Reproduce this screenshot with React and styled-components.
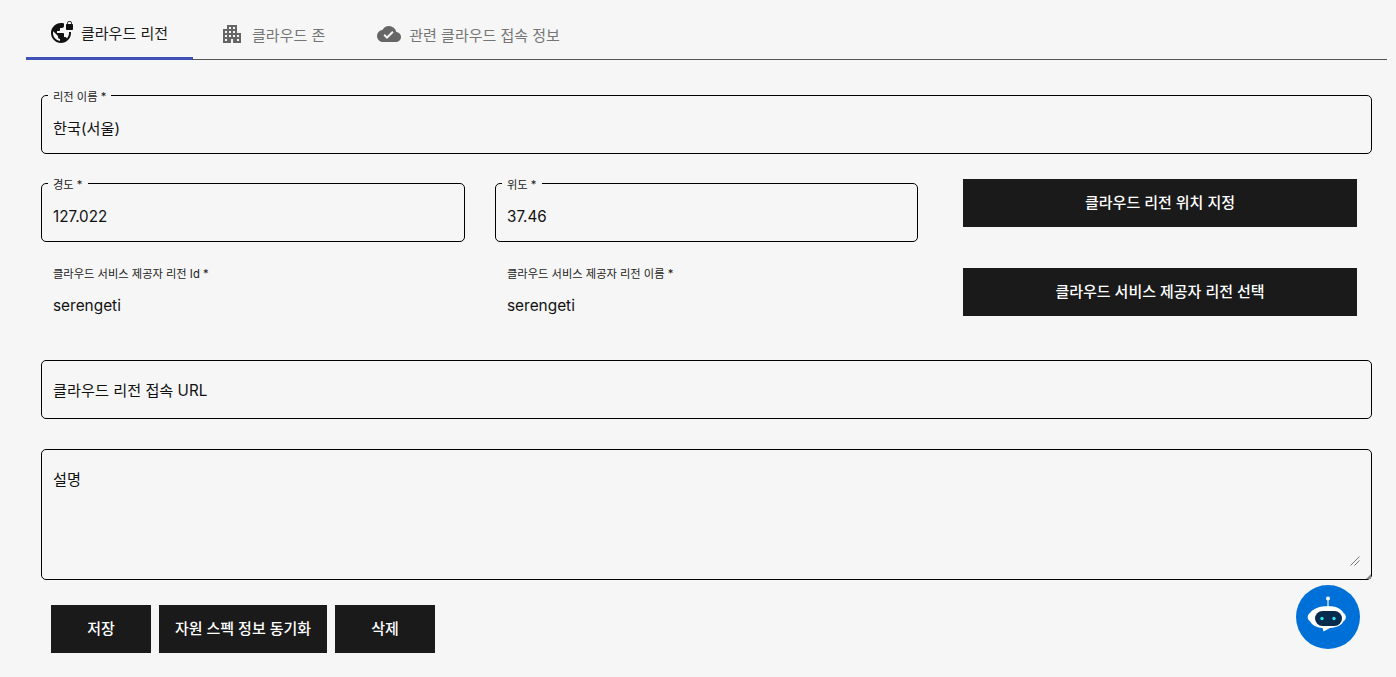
import React from "react";
import styled, { createGlobalStyle } from "styled-components";
import { MdVpnLock, MdApartment, MdCloudDone } from "react-icons/md";

const Global = createGlobalStyle`
  html, body { margin: 0; padding: 0; background: #f6f6f6; }
  body { font-family: Inter, "Noto Sans CJK KR", sans-serif; color: #111; }
  * { box-sizing: border-box; }
`;
const Page = styled.div`
  width: 1396px; height: 677px; overflow: hidden; padding: 0 9px 0 26px; position: relative;
`;
const Tabs = styled.div`
  display: flex; height: 60px; border-bottom: 1px solid #555;
`;
const Tab = styled.div`
  display: flex; align-items: center; gap: ${p => p.$gap}px; height: ${p => (p.$active ? 60 : 59)}px;
  padding: ${p => (p.$active ? "7px" : "9px")} ${p => p.$pr || 24}px 0 ${p => p.$pl}px;
  font-size: 15px; font-weight: 400;
  color: ${p => (p.$active ? "#1a1a1a" : "#757575")};
  border-bottom: ${p => (p.$active ? "3px solid #3f51b5" : "none")};
  svg { flex: none; width: 24px; height: 24px; color: ${p => (p.$active ? "#111" : "#666")}; }
`;
const Form = styled.div`
  display: flex; flex-direction: column; padding: 35px 15px 0 15px;
`;
const Outlined = styled.div`
  position: relative; height: ${p => p.$h || 59}px;
  margin-top: ${p => p.$mt || 0}px;
  border: 1px solid #000; border-radius: 5px; padding: ${p => p.$pt || 0}px 11px ${p => p.$pb || 0}px;
  display: flex; align-items: ${p => (p.$top ? "flex-start" : "center")};
  font-size: 15.2px; color: #111;
`;
const Float = styled.span`
  position: absolute; left: 6px; top: -5px; padding: 0 5px; background: #f6f6f6;
  font-size: 11.25px; line-height: 13px; color: #222;
`;
const Row = styled.div`
  display: grid; grid-template-columns: 424px 423px 394px; column-gap: 30px;
  margin-top: ${p => p.$mt}px; align-items: start;
  & > :nth-child(3) { margin-left: 15px; }
`;
const Plain = styled.div`
  padding: 0 12px; display: flex; flex-direction: column;
`;
const PlainLabel = styled.div`
  font-size: 11.25px; line-height: 13px; color: #222; margin-top: 26px;
`;
const PlainValue = styled.div`
  font-size: 15.4px; line-height: 18px; color: #111; margin-top: 16px;
`;
const Dark = styled.button`
  appearance: none; border: 0; background: #1a1a1a; color: #fff; height: 48px;
  font-family: inherit; font-size: 15px; font-weight: 500; padding: 0 0 4px;
  width: ${p => p.$w}px; margin-top: ${p => p.$mt || 0}px;
`;
const Actions = styled.div`
  display: flex; gap: 8px; margin-top: 25px; padding-left: 10px;
`;
const Gap = styled.div`height: ${p => p.$h}px;`;
const Grip = styled.svg`
  position: absolute; right: 11px; bottom: 13px;
`;
const Corner = styled.svg`
  position: absolute; right: 0; bottom: 0;
`;
const Chat = styled.div`
  position: fixed; left: 1296px; top: 585px; width: 64px; height: 64px; border-radius: 50%;
  background: #0070d9; display: flex; align-items: center; justify-content: center;
`;

const BotIcon = () => (
  <svg width="64" height="64" viewBox="0 0 64 64">
    <circle cx="32" cy="13.500" r="2" fill="#fff" />
    <rect x="31.300" y="15" width="1.400" height="7" fill="#cfe3f7" />
    <path fill="#fff" d="M32 21c8 0 13.500 2.800 15.500 7 1.500 1 2.300 2.500 2.300 4.300 0 1.700-.8 3-2.300 4-2 4.200-6.500 6.200-13.500 6.700l-6.500 3.500-1-3.500c-7-.6-10.500-3-12.500-6.700-1.500-1-2.300-2.300-2.300-4 0-1.800.8-3.300 2.300-4.300C16.500 23.800 24 21 32 21Z" />
    <rect x="19" y="26" width="27" height="15" rx="7.500" fill="#082a4d" />
    <circle cx="26" cy="33.500" r="1.700" fill="#2ee6f2" />
    <circle cx="38" cy="33.500" r="1.700" fill="#2ee6f2" />
  </svg>
);

export default function App() {
  return (
    <Page>
      <Global />
      <Tabs>
        <Tab $active $pl={24} $pr={25} $gap={7}><MdVpnLock />클라우드 리전</Tab>
        <Tab $pl={27} $gap={8}><MdApartment />클라우드 존</Tab>
        <Tab $pl={28} $gap={8}><MdCloudDone />관련 클라우드 접속 정보</Tab>
      </Tabs>
      <Form>
        <Outlined $pt={5}>
          <Float>리전 이름 *</Float>
          한국(서울)
        </Outlined>
        <Row $mt={25}>
          <Outlined $mt={4} $pt={7}>
            <Float>경도 *</Float>
            127.022
          </Outlined>
          <Outlined $mt={4} $pt={7}>
            <Float>위도 *</Float>
            37.46
          </Outlined>
          <Dark $w={394}>클라우드 리전 위치 지정</Dark>
        </Row>
        <Row $mt={0}>
          <Plain>
            <PlainLabel>클라우드 서비스 제공자 리전 Id *</PlainLabel>
            <PlainValue>serengeti</PlainValue>
          </Plain>
          <Plain>
            <PlainLabel>클라우드 서비스 제공자 리전 이름 *</PlainLabel>
            <PlainValue>serengeti</PlainValue>
          </Plain>
          <Dark $w={394} $mt={26}>클라우드 서비스 제공자 리전 선택</Dark>
        </Row>
        <Gap $h={44} />
        <Outlined $pb={2}>클라우드 리전 접속 URL</Outlined>
        <Gap $h={30} />
        <Outlined $h={131} $top $pt={17}>
          설명
          <Grip width="10" height="10" viewBox="0 0 10 10">
            <path d="M0.500 9.500 9.500 0.500M4.500 9.500l5-5" stroke="#666" strokeWidth="0.9" fill="none" />
          </Grip>
          <Corner width="5" height="5" viewBox="0 0 5 5">
            <path d="M0 5 5 0v5Z" fill="#888" />
          </Corner>
        </Outlined>
        <Actions>
          <Dark $w={100}>저장</Dark>
          <Dark $w={168}>자원 스펙 정보 동기화</Dark>
          <Dark $w={100}>삭제</Dark>
        </Actions>
      </Form>
      <Chat><BotIcon /></Chat>
    </Page>
  );
}
